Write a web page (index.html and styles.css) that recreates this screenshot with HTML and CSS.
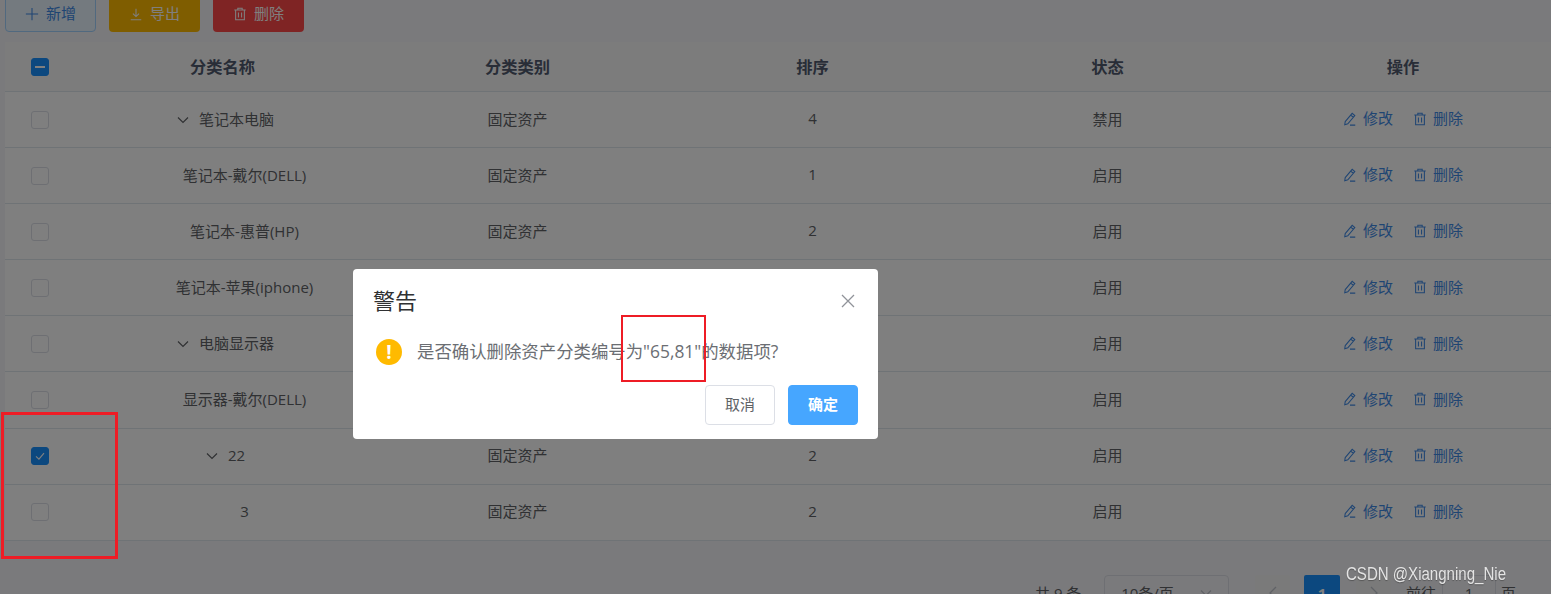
FILE: index.html
```html
<!DOCTYPE html>
<html lang="zh-CN">
<head>
  <meta charset="UTF-8" />
  <title>资产分类</title>
  <link rel="stylesheet" href="styles.css">
</head>
<body>

  <svg class="icon-defs" width="0" height="0">
    <symbol id="i-plus" viewBox="0 0 16 16"><path d="M8 1v14M1 8h14" /></symbol>
    <symbol id="i-download" viewBox="0 0 16 16"><path d="M8 2v8.5M4.5 7.5 8 11l3.5-3.5M2 14.5h12" /></symbol>
    <symbol id="i-trash" viewBox="0 0 16 16"><path d="M1.5 3.5h13M5.5 3.5V1.5h5v2M3 3.5v11h10v-11M6.2 6.2v5.8M9.8 6.2v5.8" /></symbol>
    <symbol id="i-edit" viewBox="0 0 16 16"><path d="M2.5 11 10.5 1.5l3 2.5-8 9.5-3.5 1zM8.800 3.500l3 2.500M8 15h6" /></symbol>
    <symbol id="i-down" viewBox="0 0 12 8"><path d="M1 1.500 6 6.500 11 1.500" /></symbol>
  </svg>

  <div class="page">
    <div class="toolbar">
      <button class="btn btn-add"><svg class="icon"><use href="#i-plus" /></svg><span>新增</span></button>
      <button class="btn btn-export"><svg class="icon"><use href="#i-download" /></svg><span>导出</span></button>
      <button class="btn btn-remove"><svg class="icon"><use href="#i-trash" /></svg><span>删除</span></button>
    </div>

    <table class="data-table">
      <colgroup>
        <col class="col-check"><col class="col-data"><col class="col-data"><col class="col-data"><col class="col-data"><col class="col-last">
      </colgroup>
      <thead>
        <tr>
          <th><span class="check check-half"></span></th>
          <th>分类名称</th>
          <th>分类类别</th>
          <th>排序</th>
          <th>状态</th>
          <th>操作</th>
        </tr>
      </thead>
      <tbody>
        <tr>
          <td><span class="check"></span></td>
          <td class="tree-parent"><svg class="expand"><use href="#i-down" /></svg>笔记本电脑</td>
          <td>固定资产</td><td>4</td><td>禁用</td>
          <td><a class="link"><svg class="icon"><use href="#i-edit" /></svg>修改</a><a class="link"><svg class="icon"><use href="#i-trash" /></svg>删除</a></td>
        </tr>
        <tr>
          <td><span class="check"></span></td>
          <td class="tree-child">笔记本-戴尔(DELL)</td>
          <td>固定资产</td><td>1</td><td>启用</td>
          <td><a class="link"><svg class="icon"><use href="#i-edit" /></svg>修改</a><a class="link"><svg class="icon"><use href="#i-trash" /></svg>删除</a></td>
        </tr>
        <tr>
          <td><span class="check"></span></td>
          <td class="tree-child">笔记本-惠普(HP)</td>
          <td>固定资产</td><td>2</td><td>启用</td>
          <td><a class="link"><svg class="icon"><use href="#i-edit" /></svg>修改</a><a class="link"><svg class="icon"><use href="#i-trash" /></svg>删除</a></td>
        </tr>
        <tr>
          <td><span class="check"></span></td>
          <td class="tree-child">笔记本-苹果(iphone)</td>
          <td></td><td></td><td>启用</td>
          <td><a class="link"><svg class="icon"><use href="#i-edit" /></svg>修改</a><a class="link"><svg class="icon"><use href="#i-trash" /></svg>删除</a></td>
        </tr>
        <tr>
          <td><span class="check"></span></td>
          <td class="tree-parent"><svg class="expand"><use href="#i-down" /></svg>电脑显示器</td>
          <td></td><td></td><td>启用</td>
          <td><a class="link"><svg class="icon"><use href="#i-edit" /></svg>修改</a><a class="link"><svg class="icon"><use href="#i-trash" /></svg>删除</a></td>
        </tr>
        <tr>
          <td><span class="check"></span></td>
          <td class="tree-child">显示器-戴尔(DELL)</td>
          <td></td><td></td><td>启用</td>
          <td><a class="link"><svg class="icon"><use href="#i-edit" /></svg>修改</a><a class="link"><svg class="icon"><use href="#i-trash" /></svg>删除</a></td>
        </tr>
        <tr>
          <td><span class="check check-on"><svg viewBox="0 0 18 18"><path d="M4.500 9.500 7.800 12.500 13.500 5.800" /></svg></span></td>
          <td class="tree-parent"><svg class="expand"><use href="#i-down" /></svg>22</td>
          <td>固定资产</td><td>2</td><td>启用</td>
          <td><a class="link"><svg class="icon"><use href="#i-edit" /></svg>修改</a><a class="link"><svg class="icon"><use href="#i-trash" /></svg>删除</a></td>
        </tr>
        <tr>
          <td><span class="check"></span></td>
          <td class="tree-child">3</td>
          <td>固定资产</td><td>2</td><td>启用</td>
          <td><a class="link"><svg class="icon"><use href="#i-edit" /></svg>修改</a><a class="link"><svg class="icon"><use href="#i-trash" /></svg>删除</a></td>
        </tr>
      </tbody>
    </table>

    <div class="pager">
      <span class="pager-total">共 9 条</span>
      <span class="pager-size">10条/页<svg class="pager-arrow"><use href="#i-down" /></svg></span>
      <span class="pager-btn"><svg class="pager-chev" viewBox="0 0 8 14"><path d="M7 1 1 7l6 6" /></svg></span>
      <span class="pager-num">1</span>
      <span class="pager-btn"><svg class="pager-chev" viewBox="0 0 8 14"><path d="M1 1l6 6-6 6" /></svg></span>
      <span class="pager-goto">前往</span>
      <span class="pager-input">1</span>
      <span class="pager-unit">页</span>
    </div>
  </div>

  <div class="overlay">
    <div class="dialog">
      <div class="dialog-head">
        <span class="dialog-title">警告</span>
        <svg class="dialog-close" viewBox="0 0 14 14"><path d="M1 1l12 12M13 1 1 13" /></svg>
      </div>
      <div class="dialog-body">
        <span class="warn-icon">!</span>
        <span class="dialog-msg">是否确认删除资产分类编号为"65,81"的数据项?</span>
      </div>
      <div class="dialog-foot">
        <button class="dlg-btn">取消</button>
        <button class="dlg-btn dlg-primary">确定</button>
      </div>
    </div>
  </div>

  <div class="mark mark-rows"></div>
  <div class="mark mark-ids"></div>
  <div class="watermark">CSDN @Xiangning_Nie</div>

</body>
</html>
```

FILE: styles.css
```css
* {
  box-sizing: border-box;
}
html, body {
  margin: 0;
  padding: 0;
  height: 594px;
  overflow: hidden;
  background-color: #f5f5f9;
  color: #606266;
  font-family: "Open Sans", "Noto Sans CJK SC", sans-serif;
  font-size: 15px;
}

.icon-defs {
  position: absolute;
}

.icon-defs path {
  fill: none;
  stroke: currentColor;
  stroke-width: 1.2;
}

.page {
  padding-left: 5px;
}

.toolbar {
  display: flex;
  gap: 13px;
  margin-top: -4px;
  height: 36px;
}

.btn {
  display: flex;
  align-items: center;
  justify-content: center;
  gap: 7px;
  width: 91px;
  height: 36px;
  padding: 0;
  border: 1px solid transparent;
  border-radius: 4px;
  font: inherit;
}

.btn span {
  padding-bottom: 3px;
}

.btn .icon {
  width: 14px;
  height: 14px;
}

.btn-add {
  background-color: #e8f4ff;
  border-color: #a3d3ff;
  color: #3f8ae6;
}

.btn-export {
  background-color: #ffba00;
  color: #fff;
}

.btn-remove {
  background-color: #ff4949;
  color: #fff;
}

.data-table {
  width: 1546px;
  margin-top: 10px;
  border-collapse: collapse;
  table-layout: fixed;
  background-color: #fff;
}

.col-check {
  width: 70px;
}

.col-data {
  width: 295px;
}

.col-last {
  width: 296px;
}

.data-table th {
  height: 49.500px;
  padding: 0 0 2px;
  background-color: #f8f8f9;
  border-bottom: 1px solid #dfe6ec;
  color: #515a6e;
  font-size: 16.250px;
  font-weight: 700;
  text-align: center;
}

.data-table td {
  height: 56.100px;
  padding: 0 0 3px;
  border-bottom: 1px solid #dfe6ec;
  text-align: center;
  font-size: 15px;
}

.check {
  display: inline-block;
  width: 18px;
  height: 18px;
  vertical-align: middle;
  background-color: #fff;
  border: 1px solid #dcdfe6;
  border-radius: 3px;
}

.check-half {
  position: relative;
  background-color: #1890ff;
  border-color: #1890ff;
}

.check-half::after {
  content: "";
  position: absolute;
  left: 3px;
  right: 3px;
  top: 7px;
  height: 2px;
  background-color: #fff;
}

.check-on {
  background-color: #1890ff;
  border-color: #1890ff;
}

.check-on svg {
  display: block;
  width: 16px;
  height: 16px;
}

.check-on path {
  fill: none;
  stroke: #fff;
  stroke-width: 1.300;
}

.tree-child {
  padding-left: 44px !important;
}

.tree-parent {
  padding-left: 6px !important;
}

.expand {
  width: 12px;
  height: 8px;
  margin-right: 10px;
  color: #606266;
  vertical-align: 1px;
}

.link {
  display: inline-flex;
  align-items: center;
  gap: 6px;
  color: #3f8ae6;
}

.link + .link {
  margin-left: 20px;
}

.link .icon {
  width: 14px;
  height: 14px;
  position: relative;
  top: 1px;
}

.pager {
  display: flex;
  align-items: flex-start;
  margin-top: 34px;
  padding-left: 1030px;
  font-size: 15px;
}

.pager-total {
  width: 69px;
  line-height: 36px;
}

.pager-size {
  display: flex;
  align-items: center;
  justify-content: center;
  gap: 26px;
  width: 125px;
  height: 36px;
  border: 1px solid #dcdfe6;
  border-radius: 4px;
  color: #606266;
}

.pager-arrow {
  width: 12px;
  height: 8px;
  color: #c0c4cc;
}

.pager-btn {
  display: flex;
  align-items: center;
  justify-content: center;
  width: 35px;
  height: 36px;
  margin-left: 26px;
  background-color: #f4f4f5;
  border-radius: 2px;
  color: #c0c4cc;
}

.pager-btn + .pager-num {
  margin-left: 14px;
}

.pager-num + .pager-btn {
  margin-left: 16px;
}

.pager-chev {
  width: 8px;
  height: 14px;
  fill: none;
  stroke: currentColor;
  stroke-width: 1.300;
}

.pager-num {
  width: 36px;
  height: 36px;
  background-color: #1890ff;
  border-radius: 2px;
  color: #fff;
  font-weight: 700;
  line-height: 36px;
  text-align: center;
}

.pager-goto {
  margin-left: 15px;
  line-height: 36px;
}

.pager-input {
  width: 54px;
  height: 36px;
  margin-left: 6px;
  border: 1px solid #dcdfe6;
  border-radius: 4px;
  line-height: 34px;
  text-align: center;
}

.pager-unit {
  margin-left: 5px;
  line-height: 36px;
}

.overlay {
  position: fixed;
  inset: 0;
  background-color: rgba(0, 0, 0, 0.5);
}

.dialog {
  position: absolute;
  left: 353px;
  top: 269px;
  width: 525px;
  height: 170px;
  padding: 20px;
  background-color: #fff;
  border-radius: 4px;
}

.dialog-head {
  display: flex;
  align-items: center;
  justify-content: space-between;
  height: 24px;
  color: #303133;
}

.dialog-title {
  padding-bottom: 4px;
  font-size: 22px;
}

.dialog-close {
  width: 14px;
  height: 14px;
  margin-right: 3px;
  fill: none;
  stroke: #909399;
  stroke-width: 1.300;
}

.dialog-body {
  display: flex;
  align-items: center;
  gap: 15px;
  margin-top: 26px;
  padding-left: 3px;
  height: 26px;
}

.warn-icon {
  width: 26px;
  height: 26px;
  border-radius: 50%;
  background-color: #ffba00;
  color: #fff;
  font-size: 19px;
  font-weight: 700;
  line-height: 26px;
  text-align: center;
}

.dialog-msg {
  padding-bottom: 4px;
  font-size: 17.400px;
  color: #6b6e73;
}

.dialog-foot {
  display: flex;
  justify-content: flex-end;
  gap: 13px;
  margin-top: 20px;
}

.dlg-btn {
  width: 70px;
  height: 40px;
  padding: 0 0 3px;
  background-color: #fff;
  border: 1px solid #dcdfe6;
  border-radius: 4px;
  color: #606266;
  font: inherit;
}

.dlg-primary {
  background-color: #46a6ff;
  border-color: #46a6ff;
  color: #fff;
  font-weight: 700;
}

.mark {
  position: fixed;
  border: 3px solid #ee1c25;
}

.mark-rows {
  left: 1px;
  top: 412px;
  width: 117px;
  height: 147px;
}

.mark-ids {
  left: 621px;
  top: 315px;
  width: 85px;
  height: 67px;
  border-width: 2px;
}

.watermark {
  position: fixed;
  left: 1346px;
  top: 562px;
  color: #e4e4e4;
  font-family: "Liberation Sans", sans-serif;
  font-size: 17.500px;
  line-height: 24px;
  white-space: nowrap;
  transform: scaleX(0.86);
  transform-origin: left center;
  text-shadow: 0 1px 1px rgba(0, 0, 0, 0.3);
}
```
